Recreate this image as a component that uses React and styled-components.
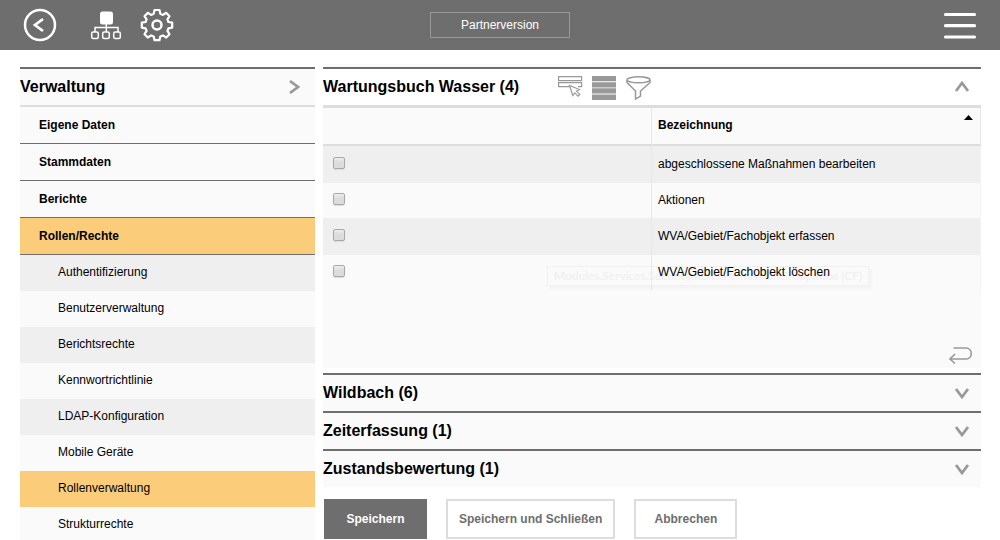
import React from 'react';
import styled, { createGlobalStyle, css } from 'styled-components';

const GlobalStyle = createGlobalStyle`
  * {
    box-sizing: border-box;
  }
  body {
    margin: 0;
    background: #fff;
    color: #000;
    font-family: 'Liberation Sans', Arial, sans-serif;
    font-size: 12px;
  }
  button, input {
    font-family: inherit;
    font-size: inherit;
  }
`;

const Page = styled.div`
  display: flex;
  flex-direction: column;
  height: 100vh;
  overflow: hidden;
`;

const TopBar = styled.header`
  display: grid;
  grid-template-columns: 1fr auto 1fr;
  align-items: center;
  flex: none;
  height: 50px;
  padding: 0 23px;
  background: #6e6e6e;
`;

const TopIcons = styled.div`
  display: flex;
  align-items: center;
  justify-content: ${({ $end }) => ($end ? 'flex-end' : 'flex-start')};
  gap: 18px;
`;

const IconButton = styled.button`
  display: flex;
  padding: 0;
  border: 0;
  background: none;
  cursor: pointer;

  &.back {
    margin-right: 15px;
  }
`;

const VersionLabel = styled.div`
  width: 140px;
  border: 1px solid #999;
  color: #fff;
  line-height: 24px;
  text-align: center;
`;

const Content = styled.div`
  display: flex;
  flex: 1;
  gap: 8px;
  min-height: 0;
  padding: 0 19px 0 20px;
`;

const Sidebar = styled.nav`
  flex: 0 0 295px;
  padding-top: 17px;
`;

const SidebarTitle = styled.div`
  display: flex;
  align-items: center;
  justify-content: space-between;
  height: 40px;
  padding-right: 11px;
  border-top: 2px solid #6e6e6e;
  border-bottom: 2px solid #ddd;
  background: #fafafa;
`;

const Title = styled.h2`
  margin: 0;
  font-size: 16px;
  line-height: 36px;
`;

const MenuList = styled.ul`
  margin: 0;
  padding: 0;
  list-style: none;
`;

const MenuLink = styled.a`
  display: block;
  height: 37px;
  padding-left: 19px;
  border-bottom: 1px solid #6e6e6e;
  background: ${({ $active }) => ($active ? '#fbcd7b' : '#fafafa')};
  color: #000;
  font-weight: bold;
  line-height: 36px;
  text-decoration: none;
`;

const SubLink = styled.a`
  display: block;
  padding-left: 38px;
  color: #000;
  line-height: 34px;
  height: 36px;
  text-decoration: none;

  li:nth-child(odd) > & {
    background: #efefef;
  }
  li:nth-child(even) > & {
    background: #fafafa;
  }
  ${({ $active }) =>
    $active &&
    css`
      li:nth-child(n) > & {
        background: #fbcd7b;
      }
    `}
`;

const Main = styled.main`
  flex: 1;
  min-width: 0;
  margin-top: 14px;
  border-top: 3px solid #fafafa;
`;

const SectionHeader = styled.div`
  display: flex;
  align-items: center;
  height: 38px;
  padding-right: 10px;
  border-top: 2px solid #6e6e6e;
  background: ${({ $open }) => ($open ? '#fff' : '#fafafa')};

  > button:last-child {
    margin-left: auto;
  }
`;

const Tools = styled.div`
  display: flex;
  gap: 9px;
  padding-top: 2px;
  margin-left: 39px;
`;

const PanelBody = styled.div`
  position: relative;
  display: flex;
  flex-direction: column;
  height: 263px;
  margin-bottom: 5px;
  border-top: 3px solid #ddd;
  background: #fafafa;
`;

const PanelFooter = styled.div`
  display: flex;
  justify-content: flex-end;
  margin-top: auto;
  padding: 0 8px 3px 0;
`;

const RightsTable = styled.table`
  position: relative;
  width: 100%;
  border-collapse: separate;
  border-spacing: 0;
  table-layout: fixed;

  th,
  td {
    padding: 0 0 2px 6px;
    border-right: 1px solid #e8e8e8;
    text-align: left;
  }
  th:first-child,
  td:first-child {
    width: 50%;
    padding-left: 10px;
  }
  td:first-child {
    padding-bottom: 4px;
  }
  th {
    height: 38px;
    border-bottom: 2px solid #ddd;
  }
  td {
    height: 37px;
  }
  tbody tr:nth-child(odd) {
    background: #efefef;
  }
  tbody tr:nth-child(even) td {
    height: 36px;
  }
  tbody tr:nth-child(2) td {
    height: 35px;
  }
  tbody td:last-child {
    border-right-color: #f4f4f4;
  }
`;

const SortHead = styled.div`
  display: flex;
  justify-content: space-between;
  padding-right: 7px;

  svg {
    margin-top: -3px;
  }
`;

const Check = styled.input`
  display: block;
  appearance: none;
  width: 12px;
  height: 12px;
  margin: 0;
  border: 1px solid #a8a8a8;
  border-radius: 2px;
  background: linear-gradient(#eee, #dcdcdc 40%, #dcdcdc);
  box-shadow: 0 1px 1px #ddd;

  &:checked {
    background: #6e6e6e;
  }
`;

const FadedTip = styled.div`
  position: absolute;
  top: 158px;
  left: 224px;
  padding: 0 6px;
  border: 1px solid #f1f1f1;
  box-shadow: 3px 3px 2px #f4f4f4;
  color: #efefef;
  font-family: Lato, sans-serif;
  line-height: 18px;
  white-space: nowrap;
`;

const Actions = styled.div`
  display: flex;
  gap: 19px;
  padding: 12px 1px 0;
`;

const ActionButton = styled.button`
  min-width: 103px;
  height: 40px;
  padding: 0 11px;
  border: 2px solid ${({ $primary }) => ($primary ? '#6e6e6e' : '#ddd')};
  background: ${({ $primary }) => ($primary ? '#6e6e6e' : '#fff')};
  color: ${({ $primary }) => ($primary ? '#fff' : '#6e6e6e')};
  font-weight: bold;
  cursor: pointer;
`;

const chevrons = {
  right: 'M4 3l8 6-8 6',
  up: 'M3 13l6-8 6 8',
  down: 'M3 5l6 8 6-8',
};

const Chevron = ({ dir }) => (
  <svg width="18" height="18" viewBox="0 0 18 18" fill="none" stroke="#999" strokeWidth="2.800">
    <path d={chevrons[dir]} />
  </svg>
);

const BackIcon = () => (
  <svg width="34" height="34" viewBox="0 0 34 34" fill="none" stroke="#fff">
    <circle cx="17" cy="17" r="15" strokeWidth="2.5" />
    <path d="M20 11l-8 6 8 6" strokeWidth="2.8" />
  </svg>
);

const TreeIcon = () => (
  <svg width="32" height="30" viewBox="0 0 32 30" fill="none" stroke="#fff" strokeWidth="1.5">
    <rect x="10" y="1.500" width="13" height="13" rx="2.5" fill="#fff" stroke="none" />
    <path d="M16.300 13v9M5 22v-4.500h23V22" />
    <rect x="1.700" y="22" width="6.600" height="6.600" rx="1.500" />
    <rect x="12.700" y="22" width="6.600" height="6.600" rx="1.500" />
    <rect x="23.700" y="22" width="6.600" height="6.600" rx="1.500" />
  </svg>
);

const GearIcon = () => (
  <svg width="34" height="34" viewBox="0 0 34 34" fill="none" stroke="#fff" strokeWidth="2.2" strokeLinejoin="round">
    <path d="M14.500 2h5l.8 3.800 2.600 1.100L26.200 4.800l3.300 3.400-2.100 3.200 1 2.600 3.800.7v4.900l-3.800.8-1 2.500 2.100 3.300-3.300 3.300-3.300-2.100-2.600 1.100-.8 3.700h-5l-.8-3.700-2.600-1.100-3.300 2.100-3.300-3.300 2.100-3.300-1-2.500L1.800 19.600v-4.900l3.800-.7 1-2.600-2.100-3.200L7.800 4.800l3.300 2.100 2.600-1.100z" />
    <circle cx="17" cy="17" r="4.500" strokeWidth="2.500" />
  </svg>
);

const MenuIcon = () => (
  <svg width="34" height="30" viewBox="0 0 34 30" stroke="#fff" strokeWidth="3.200" strokeLinecap="round">
    <path d="M2.500 4.500h29M2.500 15.700h29M2.500 27h29" />
  </svg>
);

const SelectIcon = () => (
  <svg width="25" height="24" viewBox="0 0 25 24" fill="none" stroke="#999">
    <path d="M.6.600h23v4H.6zM12 10.600H.6v-4h23v4H20" strokeWidth="1.200" />
    <path d="M11.500 9.500l3.300 10 2-2.700 3.300 3.300 1.700-1.700-3.300-3.300 3-1.600z" fill="#fff" strokeWidth="1.200" />
  </svg>
);

const ListIcon = () => (
  <svg width="25" height="24" viewBox="0 0 25 24" fill="#999">
    <path d="M0 0h24v5.300H0zM0 6.200h24v5.200H0zM0 12.300h24v5.200H0zM0 18.500h24V24H0z" />
  </svg>
);

const FilterIcon = () => (
  <svg width="25" height="24" viewBox="0 0 25 24" fill="none" stroke="#999" strokeWidth="1.500">
    <ellipse cx="12.500" cy="3.800" rx="11.500" ry="3" />
    <path d="M1 4v2.500l8.500 8.500v8.200l5-3V15L24 6.500V4" strokeLinejoin="round" />
  </svg>
);

const ReturnIcon = () => (
  <svg width="25" height="19" viewBox="0 0 25 19" fill="none" stroke="#999" strokeWidth="1.600">
    <path d="M5.500 2h12.500c7 0 7 11 0 11H2M7 8l-5 5 5 4.500" />
  </svg>
);

const menu = ['Eigene Daten', 'Stammdaten', 'Berichte', 'Rollen/Rechte'];

const subMenu = [
  'Authentifizierung',
  'Benutzerverwaltung',
  'Berichtsrechte',
  'Kennwortrichtlinie',
  'LDAP-Konfiguration',
  'Mobile Geräte',
  'Rollenverwaltung',
  'Strukturrechte',
];

const rights = [
  'abgeschlossene Maßnahmen bearbeiten',
  'Aktionen',
  'WVA/Gebiet/Fachobjekt erfassen',
  'WVA/Gebiet/Fachobjekt löschen',
];

const closedSections = ['Wildbach (6)', 'Zeiterfassung (1)', 'Zustandsbewertung (1)'];

const Header = () => (
  <TopBar>
    <TopIcons>
      <IconButton className="back" aria-label="Zurück"><BackIcon /></IconButton>
      <IconButton aria-label="Struktur"><TreeIcon /></IconButton>
      <IconButton aria-label="Einstellungen"><GearIcon /></IconButton>
    </TopIcons>
    <VersionLabel>Partnerversion</VersionLabel>
    <TopIcons $end>
      <IconButton aria-label="Menü"><MenuIcon /></IconButton>
    </TopIcons>
  </TopBar>
);

const SideMenu = () => (
  <Sidebar>
    <SidebarTitle>
      <Title>Verwaltung</Title>
      <IconButton aria-label="Verwaltung öffnen"><Chevron dir="right" /></IconButton>
    </SidebarTitle>
    <MenuList>
      {menu.map(item => (
        <li key={item}>
          <MenuLink href="#" $active={item === 'Rollen/Rechte'}>{item}</MenuLink>
        </li>
      ))}
    </MenuList>
    <MenuList>
      {subMenu.map(item => (
        <li key={item}>
          <SubLink href="#" $active={item === 'Rollenverwaltung'}>{item}</SubLink>
        </li>
      ))}
    </MenuList>
  </Sidebar>
);

const RightsPanel = () => (
  <PanelBody>
    <FadedTip>Modules.Services.Security.Role/PermissionGroupInfos (CF)</FadedTip>
    <RightsTable>
      <thead>
        <tr>
          <th aria-label="Auswahl" />
          <th>
            <SortHead>
              Bezeichnung
              <svg width="9" height="5" viewBox="0 0 9 5"><path d="M4.500 0L9 5H0z" /></svg>
            </SortHead>
          </th>
        </tr>
      </thead>
      <tbody>
        {rights.map((right, i) => (
          <tr key={right}>
            <td><Check type="checkbox" id={`right-${i}`} /></td>
            <td><label htmlFor={`right-${i}`}>{right}</label></td>
          </tr>
        ))}
      </tbody>
    </RightsTable>
    <PanelFooter>
      <IconButton aria-label="Zurücksetzen"><ReturnIcon /></IconButton>
    </PanelFooter>
  </PanelBody>
);

const App = () => (
  <>
    <GlobalStyle />
    <Page>
      <Header />
      <Content>
        <SideMenu />
        <Main>
          <SectionHeader $open>
            <Title>Wartungsbuch Wasser (4)</Title>
            <Tools>
              <IconButton aria-label="Auswählen"><SelectIcon /></IconButton>
              <IconButton aria-label="Alle anzeigen"><ListIcon /></IconButton>
              <IconButton aria-label="Filter"><FilterIcon /></IconButton>
            </Tools>
            <IconButton aria-label="Zuklappen"><Chevron dir="up" /></IconButton>
          </SectionHeader>
          <RightsPanel />
          {closedSections.map(name => (
            <SectionHeader key={name}>
              <Title>{name}</Title>
              <IconButton aria-label={`${name} aufklappen`}><Chevron dir="down" /></IconButton>
            </SectionHeader>
          ))}
          <Actions>
            <ActionButton $primary>Speichern</ActionButton>
            <ActionButton>Speichern und Schließen</ActionButton>
            <ActionButton>Abbrechen</ActionButton>
          </Actions>
        </Main>
      </Content>
    </Page>
  </>
);

export default App;
